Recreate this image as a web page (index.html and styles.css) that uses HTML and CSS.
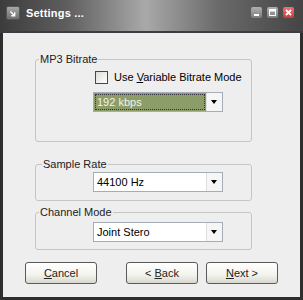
FILE: index.html
```html
<!DOCTYPE html>
<html lang="en">
<head>
    <meta charset="UTF-8">
    <title>Settings ...</title>
    <link rel="stylesheet" href="styles.css">
</head>
<body>

<div class="window">
    <div class="titlebar">
        <span class="app-icon">
            <svg width="14" height="14" viewBox="0 0 14 14">
                <path d="M4 4 L9 9 M9 5 L9 9 L5 9" stroke="#fff" stroke-width="1.6" fill="none"/>
            </svg>
        </span>
        <span class="title">Settings ...</span>
        <span class="controls">
            <span class="ctl"><svg width="11" height="11" viewBox="0 0 11 11"><rect x="3" y="7" width="5" height="2" fill="#fff"/></svg></span>
            <span class="ctl"><svg width="11" height="11" viewBox="0 0 11 11"><rect x="2.5" y="2.5" width="6" height="6" fill="none" stroke="#fff" stroke-width="1"/><rect x="2.5" y="2.5" width="6" height="2" fill="#fff"/></svg></span>
            <span class="ctl close"><svg width="11" height="11" viewBox="0 0 11 11"><path d="M3 3 L8 8 M8 3 L3 8" stroke="#fff" stroke-width="1.8"/></svg></span>
        </span>
    </div>

    <div class="content">
        <fieldset class="group group-bitrate">
            <legend>MP3 Bitrate</legend>
            <div class="group-body">
                <label class="check-row">
                    <span class="checkbox"></span>
                    <span>Use <u>V</u>ariable Bitrate Mode</span>
                </label>
                <div class="combo selected">
                    <span class="combo-value"><span class="focus">192 kbps</span></span>
                    <span class="combo-arrow"></span>
                </div>
            </div>
        </fieldset>

        <fieldset class="group group-rate">
            <legend>Sample Rate</legend>
            <div class="group-body">
                <div class="combo">
                    <span class="combo-value">44100 Hz</span>
                    <span class="combo-arrow"></span>
                </div>
            </div>
        </fieldset>

        <fieldset class="group group-channel">
            <legend>Channel Mode</legend>
            <div class="group-body">
                <div class="combo">
                    <span class="combo-value">Joint Stero</span>
                    <span class="combo-arrow"></span>
                </div>
            </div>
        </fieldset>

        <div class="buttons">
            <button class="btn btn-cancel"><u>C</u>ancel</button>
            <button class="btn btn-back">&lt; <u>B</u>ack</button>
            <button class="btn btn-next"><u>N</u>ext &gt;</button>
        </div>
    </div>
</div>

</body>
</html>
```

FILE: styles.css
```css
body {
    margin: 0;
    padding: 0;
    font-family: 'Liberation Sans', Arial, sans-serif;
    font-size: 11px;
    color: #000;
}

.window {
    width: 303px;
    height: 300px;
    background: #2e2e2e;
    display: flex;
    flex-direction: column;
}

.titlebar {
    height: 33px;
    flex-shrink: 0;
    display: flex;
    align-items: center;
    padding: 0 9px 0 6px;
    background: linear-gradient(to right, #3c3c3c 0%, #5e5e5e 22%, #a9a9a9 48%, #6a6a6a 72%, #444 100%);
    border-bottom: 2px solid #3a3d42;
    box-sizing: border-box;
}

.app-icon {
    width: 14px;
    height: 14px;
    border-radius: 2px;
    background: linear-gradient(#a8a8a8, #6e6e6e);
    border: 1px solid #555;
    box-sizing: border-box;
    display: flex;
    margin-top: -6px;
}

.title {
    color: #fff;
    font-weight: bold;
    font-size: 11px;
    margin-left: 6px;
    margin-top: -5px;
    letter-spacing: 0.2px;
}

.controls {
    margin-left: auto;
    display: flex;
    gap: 5px;
    margin-top: -6px;
}

.ctl {
    width: 11px;
    height: 11px;
    border-radius: 2px;
    background: linear-gradient(#b0b0b0, #7c7c7c);
    display: flex;
}

.ctl.close {
    background: linear-gradient(#f07070, #c83c3c);
}

.content {
    flex: 1;
    margin: 0 3px 3px 3px;
    background: #eeeeee;
    display: flex;
    flex-direction: column;
}

.group {
    margin: 0 0 0 32px;
    width: 217px;
    box-sizing: border-box;
    border: 1px solid #c5c5c5;
    border-radius: 3px;
    padding: 0;
}

.group legend {
    padding: 0 1px;
    margin-left: 3px;
    line-height: 13px;
    color: #222;
}

.group-body {
    padding-left: 57px;
}

.group-bitrate {
    margin-top: 20px;
    padding: 4px 0 29px 0;
}

.group-rate {
    margin-top: 16px;
    padding: 1px 0 8px 0;
}

.group-rate legend {
    margin-left: 6px;
}

.group-channel {
    margin-top: 5px;
    padding: 3px 0 7px 0;
}

.check-row {
    display: flex;
    align-items: center;
    gap: 6px;
    height: 14px;
    margin-left: 2px;
    margin-bottom: 8px;
}

.checkbox {
    width: 11px;
    height: 11px;
    border: 1px solid #1c5180;
    background: linear-gradient(135deg, #dcdcd7, #fff);
}

.combo {
    width: 130px;
    height: 20px;
    box-sizing: border-box;
    border: 1px solid #a5acb5;
    background: #fff;
    display: flex;
}

.combo-value {
    flex: 1;
    display: flex;
    align-items: center;
    padding-left: 3px;
}

.combo.selected .combo-value {
    background: #8d9d6a;
    padding: 1px;
}

.focus {
    flex: 1;
    height: 100%;
    box-sizing: border-box;
    border: 1px dotted #333;
    color: #f2f2e4;
    display: flex;
    align-items: center;
    padding-left: 1px;
}

.combo-arrow {
    width: 15px;
    border-left: 1px solid #e0e0e0;
    background: #f6f6f6;
    position: relative;
}

.combo-arrow::after {
    content: "";
    position: absolute;
    left: 4px;
    top: 7px;
    border-left: 3.5px solid transparent;
    border-right: 3.5px solid transparent;
    border-top: 4px solid #000;
}

.buttons {
    display: flex;
    margin: 12px 0 0 22px;
}

.btn {
    width: 72px;
    height: 22px;
    border: 1px solid #5a5a5a;
    border-radius: 3px;
    background: linear-gradient(#ffffff 0%, #f2f2ee 60%, #d8d8d0 100%);
    font-family: 'Liberation Sans', Arial, sans-serif;
    font-size: 11px;
    color: #222;
    padding: 0;
}

.btn-back {
    margin-left: 29px;
}

.btn-next {
    margin-left: 8px;
}
```
